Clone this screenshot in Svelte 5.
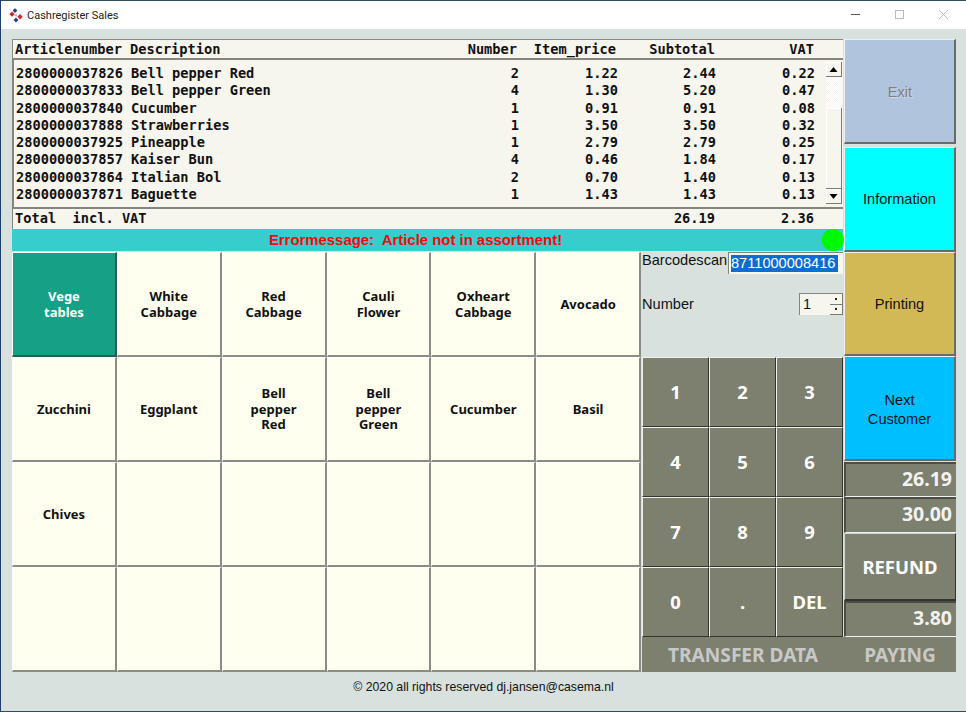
<script>
  const rows = [
    ['2800000037826', 'Bell pepper Red', '2', '1.22', '2.44', '0.22'],
    ['2800000037833', 'Bell pepper Green', '4', '1.30', '5.20', '0.47'],
    ['2800000037840', 'Cucumber', '1', '0.91', '0.91', '0.08'],
    ['2800000037888', 'Strawberries', '1', '3.50', '3.50', '0.32'],
    ['2800000037925', 'Pineapple', '1', '2.79', '2.79', '0.25'],
    ['2800000037857', 'Kaiser Bun', '4', '0.46', '1.84', '0.17'],
    ['2800000037864', 'Italian Bol', '2', '0.70', '1.40', '0.13'],
    ['2800000037871', 'Baguette', '1', '1.43', '1.43', '0.13']
  ];
  const products = [
    ['Vege', 'tables'], ['White', 'Cabbage'], ['Red', 'Cabbage'], ['Cauli', 'Flower'], ['Oxheart', 'Cabbage'], ['Avocado'],
    ['Zucchini'], ['Eggplant'], ['Bell', 'pepper', 'Red'], ['Bell', 'pepper', 'Green'], ['Cucumber'], ['Basil'],
    ['Chives'], [], [], [], [], [],
    [], [], [], [], [], []
  ];
  const keys = ['1', '2', '3', '4', '5', '6', '7', '8', '9', '0', '.', 'DEL'];
</script>

<div class="window">
  <header class="titlebar">
    <svg class="logo" viewBox="0 0 14 16" width="14" height="16">
      <path d="M6 1.2l2.4 2.4L6 6 3.600 3.600z" fill="#2a3f8f" />
      <path d="M3 4.600l2.600 2.600L3 9.800.4 7.200z" fill="#d8232a" />
      <circle cx="7" cy="8.200" r="1.300" fill="#a9bcdc" />
      <path d="M11 7l2.700 2.700L11 12.400 8.300 9.700z" fill="#d8232a" />
      <path d="M7 10.400l2.500 2.500L7 15.400l-2.500-2.500z" fill="#2a3f8f" />
    </svg>
    <span class="title">Cashregister Sales</span>
    <div class="controls">
      <svg width="12" height="12" viewBox="0 0 12 12"><path d="M1 5.500h9" stroke="#555" fill="none" /></svg>
      <svg width="12" height="12" viewBox="0 0 12 12"><rect x="1.500" y="1.500" width="8" height="8" stroke="#bbb" fill="none" /></svg>
      <svg width="12" height="12" viewBox="0 0 12 12"><path d="M1 1l9 9M10 1l-9 9" stroke="#bbb" fill="none" /></svg>
    </div>
  </header>

  <main class="app">
    <div class="top">
      <div class="left">
        <div class="tablehead row-grid">
          <span>Articlenumber</span><span>Description</span><span class="r">Number</span><span class="r">Item_price</span><span class="r">Subtotal</span><span class="r">VAT</span>
        </div>
        <div class="list">
          <div class="list-rows">
            {#each rows as r}
              <div class="row-grid data">
                <span>{r[0]}</span><span>{r[1]}</span><span class="r">{r[2]}</span><span class="r">{r[3]}</span><span class="r">{r[4]}</span><span class="r">{r[5]}</span>
              </div>
            {/each}
          </div>
          <div class="scrollbar">
            <div class="sb-btn"><svg width="9" height="5" viewBox="0 0 9 5"><path d="M4.500 0l4 5h-8z" fill="#000" /></svg></div>
            <div class="sb-track"></div>
            <div class="sb-thumb"></div>
            <div class="sb-btn"><svg width="9" height="5" viewBox="0 0 9 5"><path d="M4.500 5l4-5h-8z" fill="#000" /></svg></div>
          </div>
        </div>
        <div class="totals row-grid">
          <span class="total-label">Total  incl. VAT</span><span class="r sub">26.19</span><span class="r vat">2.36</span>
        </div>
        <div class="errorbar">
          <span class="errtext">Errormessage:  Article not in assortment!</span>
          <span class="led"></span>
        </div>
      </div>
      <div class="side-top">
        <button class="side exit">Exit</button>
        <button class="side info">Information</button>
      </div>
    </div>

    <div class="bottom">
      <div class="products">
        {#each products as p, i}
          <button class="product" class:active={i === 0}>
            {#each p as line}<span>{line}</span>{/each}
          </button>
        {/each}
      </div>
      <div class="middle">
        <div class="scan">
          <div class="scanrow">
            <span class="lbl">Barcodescan</span>
            <div class="barcode"><span class="sel">8711000008416</span></div>
          </div>
          <div class="numrow">
            <span class="lbl">Number</span>
            <div class="spin">
              <span class="spinval">1</span>
              <div class="spinbtns">
                <div class="spinbtn"><i></i></div>
                <div class="spinbtn"><i></i></div>
              </div>
            </div>
          </div>
        </div>
        <div class="numpad">
          {#each keys as k}<button class="key">{k}</button>{/each}
        </div>
        <div class="transfer">TRANSFER DATA</div>
      </div>
      <div class="side-bottom">
        <button class="side print">Printing</button>
        <button class="side next">Next<br />Customer</button>
        <div class="amount a1">26.19</div>
        <div class="amount a2">30.00</div>
        <button class="refund">REFUND</button>
        <div class="amount a3">3.80</div>
        <div class="paying">PAYING</div>
      </div>
    </div>

    <footer class="foot">© 2020 all rights reserved dj.jansen@casema.nl</footer>
  </main>
</div>

<style>
  :global(body) {
    margin: 0;
    background: #d9e1de;
  }
  .window {
    width: 966px;
    height: 712px;
    box-sizing: border-box;
    border-top: 1px solid #2e4a66;
    border-left: 1px solid #1f3f6e;
    border-bottom: 1px solid #2e4a66;
    display: flex;
    flex-direction: column;
    background: #d9e1de;
    overflow: hidden;
  }
  .titlebar {
    height: 28px;
    flex: none;
    background: #fff;
    display: flex;
    align-items: center;
    padding-left: 8px;
    color: #222;
  }
  .logo {
    margin-right: 4px;
    margin-top: 0;
  }
  .title {
    font: 11px "Roboto", "Noto Sans", sans-serif;
  }
  .controls {
    margin-left: auto;
    display: flex;
    gap: 32px;
    padding-right: 16px;
    margin-top: -1px;
  }
  .app {
    flex: 1;
    padding: 10px 9px 0 11px;
    display: flex;
    flex-direction: column;
  }
  .top {
    display: flex;
    height: 213px;
  }
  .left {
    width: 831px;
    margin-right: 1px;
    display: flex;
    flex-direction: column;
    flex: none;
  }
  .row-grid {
    display: grid;
    grid-template-columns: 115px 270px 118px 99px 98px 99px;
    font: bold 13.67px/17.3px "DejaVu Sans Mono", monospace;
    color: #111;
    white-space: pre;
  }
  .r {
    text-align: right;
  }
  .tablehead {
    height: 21px;
    box-sizing: border-box;
    background: #f6f5ee;
    border-top: 1px solid #8a8a84;
    border-left: 1px solid #8a8a84;
    border-bottom: 2px solid #85857f;
    padding: 1px 0 0 2px;
    align-items: center;
    grid-template-columns: 115px 269px 118px 99px 99px 99px;
  }
  .list {
    height: 147px;
    box-sizing: border-box;
    background: #f6f5ee;
    border-left: 2px solid #85857f;
    display: flex;
  }
  .list-rows {
    flex: 1;
    min-width: 0;
    padding: 5px 0 0 2px;
  }
  .data {
    height: 17.3px;
  }
  .scrollbar {
    width: 16px;
    display: flex;
    flex-direction: column;
    padding: 2px 1px 3px 0;
    flex: none;
    background: #f6f5ee;
  }
  .sb-btn {
    height: 15px;
    flex: none;
    box-sizing: border-box;
    background: #f6f5ee;
    border-right: 1px solid #7a7a74;
    border-bottom: 1px solid #7a7a74;
    box-shadow: inset 1px 1px 0 #fff;
    display: flex;
    align-items: center;
    justify-content: center;
  }
  .sb-track {
    height: 31px;
    flex: none;
    background: repeating-conic-gradient(#f6f5ee 0 25%, #fff 0 50%) 0 0 / 2px 2px;
  }
  .sb-thumb {
    flex: 1;
    box-sizing: border-box;
    background: #f6f5ee;
    border-right: 1px solid #7a7a74;
    border-bottom: 1px solid #7a7a74;
    box-shadow: inset 1px 1px 0 #fff;
  }
  .totals {
    height: 22px;
    box-sizing: border-box;
    background: #f6f5ee;
    border-top: 2px solid #85857f;
    border-left: 1px solid #85857f;
    padding-left: 2px;
    align-items: center;
    grid-template-columns: 504px 196px 99px;
  }
  .errorbar {
    height: 22px;
    flex: none;
    background: #37cdcd;
    position: relative;
    display: flex;
    align-items: center;
    justify-content: center;
    padding-right: 24px;
    box-sizing: border-box;
  }
  .errtext {
    color: #f40808;
    font: bold 14.9px "Liberation Sans", sans-serif;
    white-space: pre;
  }
  .led {
    position: absolute;
    right: -1px;
    top: 0;
    width: 22px;
    height: 22px;
    border-radius: 50%;
    background: #00f800;
  }
  .side-top {
    flex: 1;
    display: flex;
    flex-direction: column;
    gap: 3px;
  }
  button {
    margin: 0;
    padding: 0;
    cursor: default;
  }
  .side {
    width: 112px;
    box-sizing: border-box;
    border: none;
    border-top: 1px solid #eef1f0;
    border-left: 1px solid #eef1f0;
    border-right: 2px solid #6b6b66;
    border-bottom: 2px solid #6b6b66;
    font: 14.6px/19px "Liberation Sans", sans-serif;
    color: #111;
    display: flex;
    align-items: center;
    justify-content: center;
    text-align: center;
  }
  .exit {
    height: 105px;
    padding: 2px 0 0 1px;
    background: #b0c4de;
    color: #808080;
    text-shadow: 1px 1px 0 #d0dcec;
  }
  .info {
    height: 105px;
    background: #00ffff;
  }
  .bottom {
    display: flex;
    height: 420px;
  }
  .products {
    width: 629px;
    flex: none;
    display: grid;
    grid-template-columns: repeat(6, 1fr);
    grid-template-rows: repeat(4, 1fr);
  }
  .product {
    box-sizing: border-box;
    background: #ffffef;
    border: none;
    border-top: 1px solid #fff;
    border-left: 1px solid #fff;
    border-right: 2px solid #8c8c86;
    border-bottom: 2px solid #8c8c86;
    display: flex;
    flex-direction: column;
    align-items: center;
    justify-content: center;
    padding-top: 1px;
    font: bold 13px/15.8px "Noto Sans", sans-serif;
    color: #111;
  }
  .product.active {
    background: #16a085;
    color: #fff;
    border-right-color: #2b5d50;
    border-bottom-color: #2b5d50;
  }
  .middle {
    width: 203px;
    flex: none;
    display: flex;
    flex-direction: column;
  }
  .scan {
    height: 105px;
    padding: 0 1px;
    box-sizing: border-box;
  }
  .scanrow {
    display: flex;
    justify-content: space-between;
    height: 22px;
  }
  .lbl {
    font: 14.6px/17px "Liberation Sans", sans-serif;
    color: #111;
  }
  .barcode {
    width: 115px;
    height: 22px;
    box-sizing: border-box;
    background: #f6f5ee;
    border-left: 1px solid #85857f;
    border-top: 1px solid #85857f;
    padding: 2px 0 0 2px;
    font: 14.6px/17px "Liberation Sans", sans-serif;
  }
  .sel {
    display: block;
    background: #0a6ed1;
    color: #fff;
    width: 107px;
    height: 17px;
    line-height: 17px;
  }
  .numrow {
    display: flex;
    justify-content: space-between;
    align-items: center;
    margin-top: 19px;
    height: 22px;
  }
  .spin {
    width: 44px;
    height: 22px;
    box-sizing: border-box;
    background: #f6f5ee;
    border-top: 1px solid #85857f;
    border-left: 1px solid #85857f;
    display: flex;
  }
  .spinval {
    flex: 1;
    padding-left: 3px;
    font: 14.6px/21px "Liberation Sans", sans-serif;
    color: #111;
  }
  .spinbtns {
    width: 13px;
    display: flex;
    flex-direction: column;
  }
  .spinbtn {
    flex: 1;
    box-sizing: border-box;
    background: #f6f5ee;
    border-right: 1px solid #7a7a74;
    border-bottom: 1px solid #7a7a74;
    display: flex;
    align-items: center;
    justify-content: center;
  }
  .spinbtn i {
    width: 2px;
    height: 2px;
    background: #222;
  }
  .numpad {
    height: 280px;
    display: grid;
    grid-template-columns: repeat(3, 1fr);
    grid-template-rows: repeat(4, 1fr);
    padding: 0 1px;
    box-sizing: border-box;
  }
  .key {
    background: #7d806e;
    border: none;
    border-top: 1px solid #f0f2f0;
    border-left: 1px solid #f0f2f0;
    border-right: 1px solid #30342c;
    border-bottom: 1px solid #30342c;
    box-sizing: border-box;
    padding-bottom: 2px;
    color: #fff;
    font: bold 18.4px "Noto Sans", sans-serif;
  }
  .transfer,
  .paying {
    background: #7d806e;
    color: #c8c8c8;
    height: 35px;
    text-align: center;
    font: bold 19.1px/37px "Noto Sans", sans-serif;
    box-sizing: border-box;
  }
  .transfer {
    margin-left: 1px;
  }
  .side-bottom {
    flex: 1;
    display: flex;
    flex-direction: column;
  }
  .print {
    height: 105px;
    padding-top: 2px;
    background: #d2b955;
  }
  .next {
    height: 105px;
    background: #00bfff;
    margin-bottom: 1px;
    display: block;
    padding-top: 4px;
    flex: none;
  }
  .amount {
    background: #7d806e;
    color: #f2f2f2;
    font: bold 19.5px/24px "Noto Sans", sans-serif;
    text-align: right;
    padding: 3px 4px 0 0;
    box-sizing: border-box;
    border-top: 2px solid #4a4e44;
    border-left: 2px solid #4a4e44;
    border-bottom: 1px solid #f0f2f0;
    width: 112px;
  }
  .a1 { height: 35px; }
  .a2 { height: 36px; }
  .a3 { height: 36px; }
  .refund {
    height: 68px;
    flex: none;
    width: 112px;
    box-sizing: border-box;
    background: #7d806e;
    border: none;
    border-top: 1px solid #cfd6d2;
    border-left: 1px solid #cfd6d2;
    border-right: 1px solid #30342c;
    border-bottom: 2px solid #30342c;
    color: #fff;
    font: bold 18.5px "Noto Sans", sans-serif;
  }
  .paying {
    width: 112px;
  }
  .foot {
    text-align: center;
    font: 12.25px "Liberation Sans", sans-serif;
    color: #111;
    margin-top: 8px;
    padding-right: 2px;
  }
</style>
